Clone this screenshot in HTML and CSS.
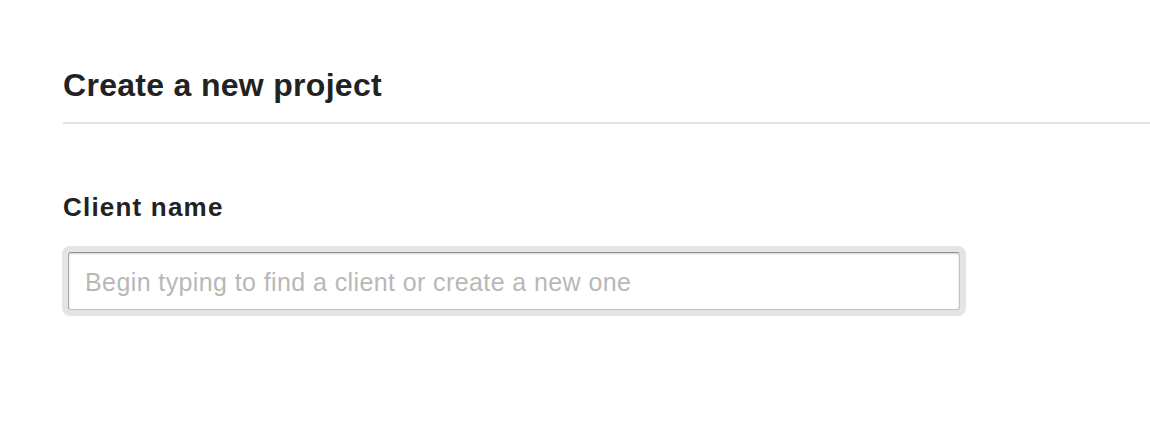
FILE: index.html
```html
<!DOCTYPE html>
<html lang="en">
<head>
<meta charset="utf-8">
<title>Create a new project</title>
<link rel="stylesheet" href="styles.css">
</head>
<body>
<main class="page">
  <h1 class="page-title">Create a new project</h1>
  <hr class="divider">
  <form class="project-form">
    <label class="field-label" for="client">Client name</label>
    <div class="field-wrap">
      <input class="field-input" id="client" type="text" placeholder="Begin typing to find a client or create a new one">
    </div>
  </form>
</main>
</body>
</html>
```

FILE: styles.css
```css
* { box-sizing: border-box; }
html, body {
  margin: 0;
  padding: 0;
  background: #ffffff;
}
body {
  font-family: "Liberation Sans", Arial, Helvetica, sans-serif;
  color: #222222;
}
.page {
  padding: 67px 0 0 63px;
}
.page-title {
  margin: 0;
  font-size: 32px;
  line-height: 36px;
  letter-spacing: 0.3px;
  font-weight: bold;
  color: #222222;
}
.divider {
  margin: 19px 0 0 0;
  border: 0;
  height: 2px;
  background: #e3e3e3;
}
.project-form {
  display: flex;
  flex-direction: column;
  align-items: flex-start;
  padding-top: 68px;
}
.field-label {
  display: block;
  font-size: 26px;
  line-height: 30px;
  letter-spacing: 1.2px;
  font-weight: bold;
  color: #222222;
}
.field-wrap {
  margin: 24px 0 0 -1px;
  width: 904px;
  padding: 6px;
  background: #e4e4e4;
  border-radius: 8px;
}
.field-input {
  display: block;
  width: 100%;
  height: 58px;
  margin: 0;
  padding: 2px 16px 0;
  border: 1px solid #c4c4c4;
  border-top-color: #8e8e8e;
  border-left-color: #a6a6a6;
  border-radius: 3px;
  background: #ffffff;
  box-shadow: inset 0 1px 2px rgba(0, 0, 0, 0.18);
  font-family: "Liberation Sans", Arial, Helvetica, sans-serif;
  font-size: 25px;
  letter-spacing: 0.4px;
  color: #333333;
  outline: none;
}
.field-input::placeholder {
  color: #b8b8b8;
  opacity: 1;
}
```
